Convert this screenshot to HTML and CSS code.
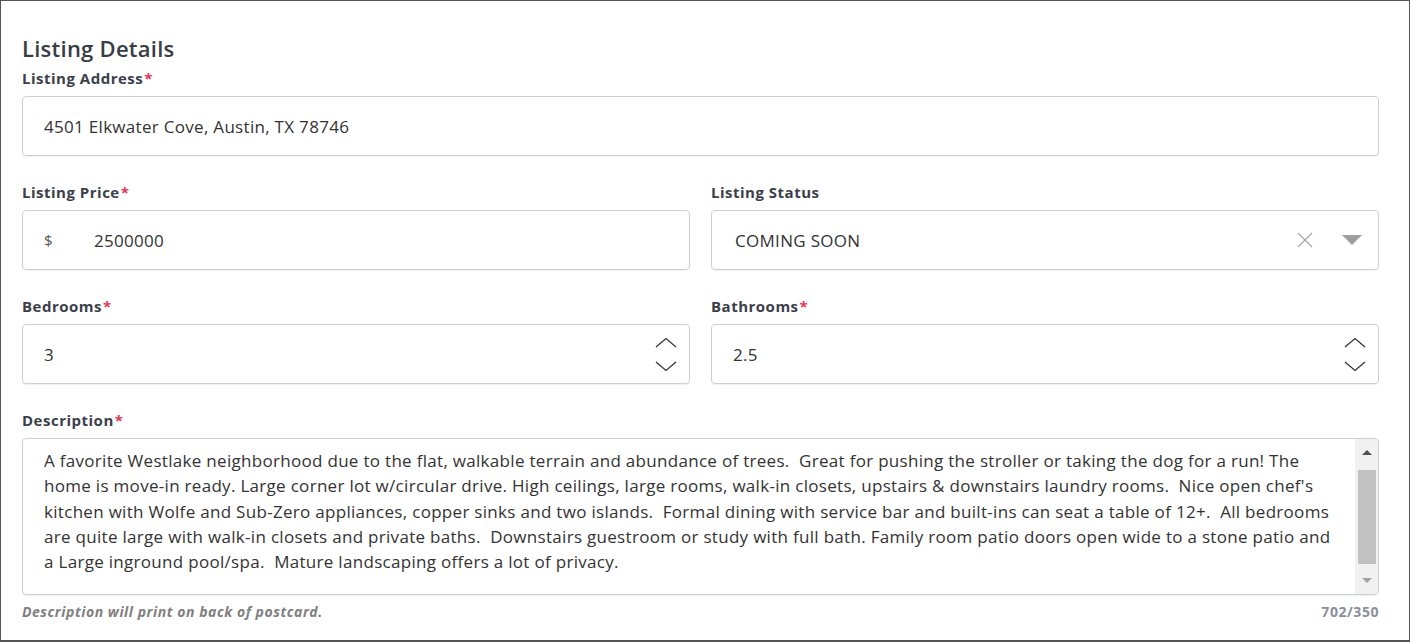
FILE: index.html
```html
<!DOCTYPE html>
<html lang="en">

<head>
    <meta charset="UTF-8">
    <meta name="viewport" content="width=device-width, initial-scale=1.0">
    <title>Listing Details</title>
    <link rel="stylesheet" href="styles.css">
</head>

<body>
    <div class="frame">
        <h2 class="titulo">Listing Details</h2>

        <div class="campo">
            <label class="etiqueta">Listing Address<span class="req">*</span></label>
            <div class="caja">4501 Elkwater Cove, Austin, TX 78746</div>
        </div>

        <div class="fila">
            <div class="campo">
                <label class="etiqueta">Listing Price<span class="req">*</span></label>
                <div class="caja">
                    <span class="signo">$</span>
                    <span>2500000</span>
                </div>
            </div>
            <div class="campo">
                <label class="etiqueta">Listing Status</label>
                <div class="caja select">
                    <span class="grow">COMING SOON</span>
                    <svg class="limpiar" width="18" height="18" viewBox="0 0 18 18">
                        <path d="M2 2 L16 16 M16 2 L2 16" stroke="#a8a8a8" stroke-width="1.3" fill="none" />
                    </svg>
                    <svg class="flecha" width="20" height="10" viewBox="0 0 20 10">
                        <path d="M0 0 L20 0 L10 10 Z" fill="#9e9e9e" />
                    </svg>
                </div>
            </div>
        </div>

        <div class="fila">
            <div class="campo">
                <label class="etiqueta">Bedrooms<span class="req">*</span></label>
                <div class="caja">
                    <span class="grow">3</span>
                    <div class="spin">
                        <svg width="22" height="11" viewBox="0 0 22 11">
                            <path d="M1 10 L11 1.5 L21 10" stroke="#333" stroke-width="1.3" fill="none" />
                        </svg>
                        <svg width="22" height="11" viewBox="0 0 22 11">
                            <path d="M1 1 L11 9.5 L21 1" stroke="#333" stroke-width="1.3" fill="none" />
                        </svg>
                    </div>
                </div>
            </div>
            <div class="campo">
                <label class="etiqueta">Bathrooms<span class="req">*</span></label>
                <div class="caja">
                    <span class="grow">2.5</span>
                    <div class="spin">
                        <svg width="22" height="11" viewBox="0 0 22 11">
                            <path d="M1 10 L11 1.5 L21 10" stroke="#333" stroke-width="1.3" fill="none" />
                        </svg>
                        <svg width="22" height="11" viewBox="0 0 22 11">
                            <path d="M1 1 L11 9.5 L21 1" stroke="#333" stroke-width="1.3" fill="none" />
                        </svg>
                    </div>
                </div>
            </div>
        </div>

        <div class="campo">
            <label class="etiqueta">Description<span class="req">*</span></label>
            <div class="area">
                <div class="texto">
                    <div class="linea">A favorite Westlake neighborhood due to the flat, walkable terrain and abundance of trees.  Great for pushing the stroller or taking the dog for a run! The</div>
                    <div class="linea">home is move-in ready. Large corner lot w/circular drive. High ceilings, large rooms, walk-in closets, upstairs &amp; downstairs laundry rooms.  Nice open chef's</div>
                    <div class="linea">kitchen with Wolfe and Sub-Zero appliances, copper sinks and two islands.  Formal dining with service bar and built-ins can seat a table of 12+.  All bedrooms</div>
                    <div class="linea">are quite large with walk-in closets and private baths.  Downstairs guestroom or study with full bath. Family room patio doors open wide to a stone patio and</div>
                    <div class="linea">a Large inground pool/spa.  Mature landscaping offers a lot of privacy.</div>
                </div>
                <div class="scroll">
                    <div class="arriba"></div>
                    <div class="pista"><div class="pulgar"></div></div>
                    <div class="abajo"></div>
                </div>
            </div>
            <div class="ayuda">
                <span class="nota">Description will print on back of postcard.</span>
                <span class="cuenta">702/350</span>
            </div>
        </div>
    </div>
</body>

</html>
```

FILE: styles.css
```css
body {
    margin: 0;
    font-family: "Open Sans", Lato, sans-serif;
    color: #333;
}

.frame {
    box-sizing: border-box;
    width: 1410px;
    height: 642px;
    border: 1px solid #555;
    border-bottom-width: 2px;
    padding: 32px 30px 0 21px;
    display: flex;
    flex-direction: column;
    gap: 26px;
}

.titulo {
    margin: 0 0 -21px 0;
    font-size: 22px;
    font-weight: 600;
    letter-spacing: 0.25px;
    line-height: 30px;
    color: #383c45;
}

.fila {
    display: grid;
    grid-template-columns: 1fr 1fr;
    column-gap: 21px;
}

.campo {
    display: flex;
    flex-direction: column;
}

.etiqueta {
    font-size: 15px;
    font-weight: 700;
    letter-spacing: 0.5px;
    line-height: 20px;
    color: #3b404b;
    margin-bottom: 8px;
}

.req {
    color: #e8345b;
    margin-left: 1px;
}

.caja {
    box-sizing: border-box;
    height: 60px;
    border: 1px solid #ccd0d5;
    border-radius: 4px;
    box-shadow: 0 1px 1px rgba(0, 0, 0, 0.06);
    padding: 0 21px;
    display: flex;
    align-items: center;
    font-size: 17px;
    letter-spacing: 0.3px;
    color: #333;
}

.select {
    padding-left: 23px;
}

.signo {
    width: 50px;
    font-size: 15px;
    color: #555;
}

.grow {
    flex: 1;
}

.limpiar {
    margin-right: 28px;
}

.flecha {
    margin-right: -5px;
}

.spin {
    display: flex;
    flex-direction: column;
    gap: 13px;
    margin-right: -9px;
}

.spin svg {
    display: block;
}

.area {
    box-sizing: border-box;
    height: 157px;
    border: 1px solid #ccd0d5;
    border-radius: 4px;
    box-shadow: 0 1px 1px rgba(0, 0, 0, 0.06);
    display: flex;
    overflow: hidden;
}

.texto {
    flex: 1;
    padding: 9px 21px 0 21px;
    font-size: 17px;
    letter-spacing: 0.3px;
    line-height: 25.3px;
    color: #333;
}

.linea {
    white-space: pre;
}

.scroll {
    width: 23px;
    background-color: #f1f1f1;
    display: flex;
    flex-direction: column;
    align-items: center;
}

.arriba {
    margin-top: 11px;
    width: 0;
    height: 0;
    border-left: 5px solid transparent;
    border-right: 5px solid transparent;
    border-bottom: 5px solid #505050;
}

.pista {
    flex: 1;
    width: 100%;
    display: flex;
    justify-content: center;
    padding: 15px 0 14px 0;
    box-sizing: border-box;
}

.pulgar {
    width: 18px;
    background-color: #c1c1c1;
}

.abajo {
    margin-bottom: 11px;
    width: 0;
    height: 0;
    border-left: 5px solid transparent;
    border-right: 5px solid transparent;
    border-top: 5px solid #a3a3a3;
}

.ayuda {
    display: flex;
    justify-content: space-between;
    margin-top: 7px;
    line-height: 20px;
    font-size: 14px;
    font-weight: 700;
    letter-spacing: 0.55px;
    color: #808080;
}

.nota {
    font-style: italic;
}

.cuenta {
    color: #8a8f99;
}
```
